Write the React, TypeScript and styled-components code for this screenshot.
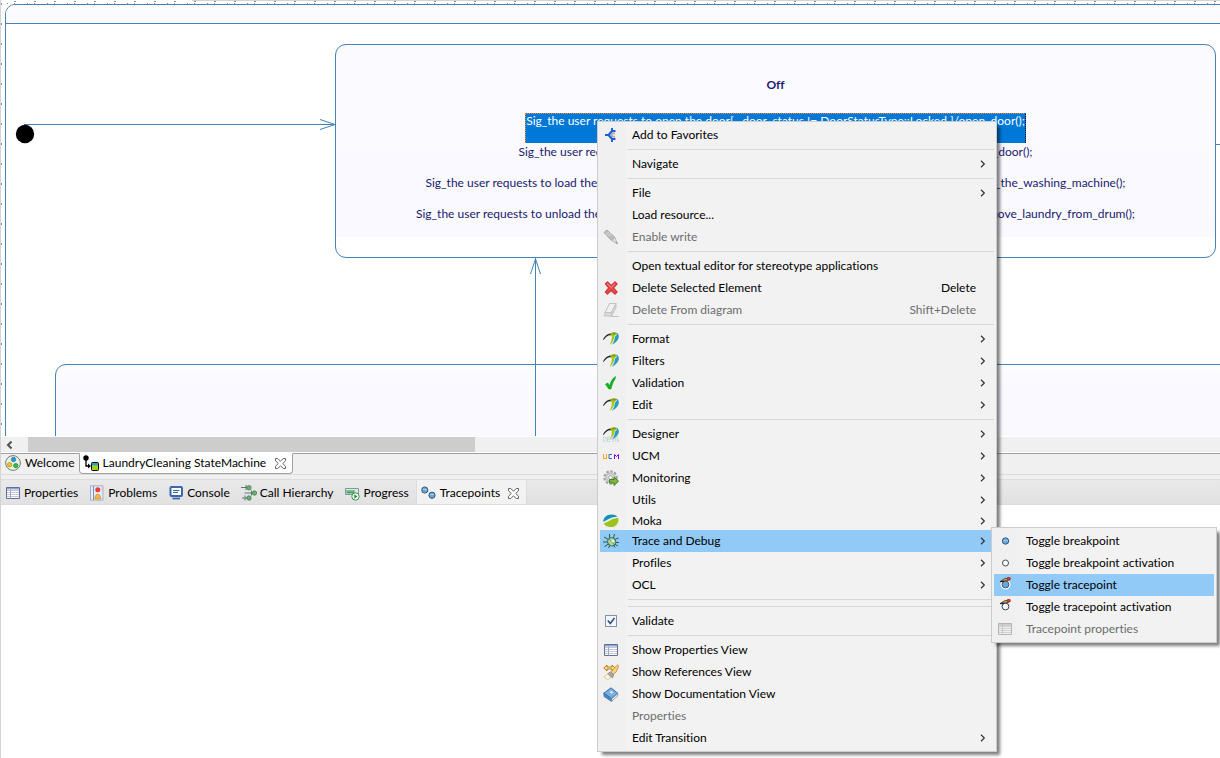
import React from "react";
import styled, { createGlobalStyle, css } from "styled-components";

const GlobalStyle = createGlobalStyle`
  *, *::before, *::after { box-sizing: border-box; }
  body {
    margin: 0;
    background: #fff;
    color: #000;
    font: 12px/16px Lato, "Open Sans", sans-serif;
    font-variant-ligatures: none;
  }
  button, input { font: inherit; color: inherit; font-variant-ligatures: none; }
`;

const line = "#4682b4";

/* ---------- workbench ---------- */

const Workbench = styled.main`
  position: relative;
  display: flex;
  flex-direction: column;
  min-height: 100vh;
  border-left: 1px solid #d4d4d4;
  overflow: hidden;
`;

/* ---------- diagram ---------- */

const Canvas = styled.section`
  position: relative;
  height: 436px;
  overflow: hidden;
  background: #fff;
`;

const TopRuler = styled.div`
  position: absolute;
  inset: 0 0 auto 0;
  height: 4px;
  background:
    repeating-linear-gradient(90deg, transparent 0 13px, #8c8c8c 13px 15px, transparent 15px 20px) 0 1px / 100% 1px no-repeat,
    repeating-linear-gradient(90deg, transparent 0 6px, #8c8c8c 6px 7px, transparent 7px 13px, #8c8c8c 13px 14px, transparent 14px 20px) 0 3px / 100% 1px no-repeat,
    linear-gradient(#d4d4d4, #d4d4d4) 191px 0 / 100% 1px no-repeat;
`;

const LeftRuler = styled.div`
  position: absolute;
  inset: 0 auto 0 0;
  width: 1px;
  background: repeating-linear-gradient(transparent 0 3px, #8c8c8c 3px 5px, transparent 5px 20px);
`;

const MachineFrame = styled.div`
  position: absolute;
  inset: 4px -20px -20px 4px;
  border: 1px solid ${line};
  border-radius: 10px;
  overflow: hidden;
`;

const MachineHeader = styled.div`
  height: 19px;
  border-bottom: 1px solid ${line};
  background: linear-gradient(#fdfdff, #f9f9ff);
`;

const OffState = styled.article`
  position: absolute;
  left: 334px;
  top: 44px;
  width: 881px;
  height: 214px;
  padding-top: 32px;
  border: 1px solid ${line};
  border-radius: 11px;
  background: linear-gradient(#fbfaff, #f9f9ff) 0 0 / 100% 192px no-repeat #fff;
  color: #191970;
`;

const StateName = styled.h1`
  margin: 0 0 20px;
  font-size: 12px;
  line-height: 16px;
  text-align: center;
`;

const Transition = styled.p<{ $width: number }>`
  display: flex;
  justify-content: space-between;
  width: ${(p) => p.$width}px;
  height: 31px;
  margin: 0 auto;
  white-space: nowrap;
`;

const SelectedTransition = styled.p`
  width: fit-content;
  height: 30px;
  margin: 0 auto 1px;
  border: 1px dotted #000;
  border-color: #ff8728 #000 transparent #ff8728;
  border-bottom: 0;
  background: #0078d7;
  color: #fff;
  line-height: 14px;
  white-space: nowrap;
`;

const LowerState = styled.article`
  position: absolute;
  inset: 364px -20px -20px 54px;
  border: 1px solid ${line};
  border-radius: 11px;
  background: linear-gradient(#fdfdff, #f9f9ff 24px);
`;

const Connectors = styled.svg`
  position: absolute;
  inset: 0;
  width: 100%;
  height: 100%;
`;

const ScrollBar = styled.div`
  display: flex;
  height: 15px;
  margin-top: 1px;
  background: #f0f0f0;
`;

const ScrollButton = styled.button`
  width: 27px;
  padding: 0 0 0 5px;
  border: 0;
  background: none;
  text-align: left;
  line-height: 0;
`;

const ScrollThumb = styled.div`
  width: 36.7%;
  background: #cdcdcd;
`;

/* ---------- tabs ---------- */

const EditorTabs = styled.nav`
  display: flex;
  height: 22px;
  margin-top: 1px;
  border-top: 1px solid #a0a0a0;
  border-bottom: 1px solid #dcdcdc;
  background: #f0f0f0;
`;

const EditorTab = styled.button<{ $active?: boolean }>`
  display: flex;
  align-items: center;
  gap: 4px;
  height: 20px;
  margin-top: -1px;
  padding: 0 4px;
  border: 0;
  background: none;
  white-space: nowrap;
  ${(p) =>
    p.$active &&
    css`
      height: 21px;
      padding: 0 6px 1px 3px;
      border: 1px solid #a0a0a0;
      border-top-color: #fff;
      border-radius: 0 0 4px 4px;
      background: #fff;
    `}
`;

const ViewTabs = styled.nav`
  display: flex;
  height: 26px;
  margin-top: 4px;
  border: solid #dcdcdc;
  border-width: 1px 0;
  background: linear-gradient(#e9e9e9, #e1e1e1);
  box-shadow: 0 -4px #f0f0f0;
`;

const ViewTab = styled.button<{ $active?: boolean }>`
  display: flex;
  align-items: center;
  gap: 3px;
  padding: 2px 7px 0 4px;
  border: 0;
  background: none;
  white-space: nowrap;
  ${(p) =>
    p.$active &&
    css`
      border: solid #dcdcdc;
      border-width: 0 1px;
      background: #f2f2f2;
    `}
`;

const CloseMark = styled.svg`
  width: 11px;
  height: 11px;
  margin-left: 5px;
`;

const ViewBody = styled.section`
  flex: 1;
  background: #fff;
`;

/* ---------- menus ---------- */

const menuBox = css`
  position: absolute;
  padding: 2px;
  border: 1px solid #ccc;
  background: linear-gradient(90deg, #f0f0f0 28px, #f2f2f2 28px);
  box-shadow: 4px 4px 3px -1px rgba(0, 0, 0, 0.5);
`;

const ContextMenu = styled.div`
  ${menuBox}
  left: 596px;
  top: 121px;
  width: 400px;
`;

const SubMenu = styled.div`
  ${menuBox}
  left: calc(100% - 3px);
  top: -3px;
  width: 226px;
`;

const ItemHost = styled.div`
  position: relative;
`;

const itemBox = css<{ $active?: boolean; $short?: boolean }>`
  display: flex;
  align-items: center;
  width: 100%;
  height: ${(p) => (p.$short ? 19 : 22)}px;
  padding: 0 8px 0 3px;
  border: 0;
  background: ${(p) => (p.$active ? "#91c9f7" : "none")};
  text-align: left;
  white-space: nowrap;
`;

const Item = styled.button<{ $active?: boolean; $short?: boolean }>`
  ${itemBox}
  &:disabled { color: #6d6d6d; }
`;

const CheckItem = styled.label`
  ${itemBox}
`;

const IconSlot = styled.span`
  flex: none;
  display: flex;
  align-items: center;
  justify-content: center;
  width: 16px;
  height: 16px;
  margin-right: 13px;
`;

const Check = styled.input`
  appearance: none;
  width: 12px;
  height: 12px;
  margin: 0;
  border: 1px solid #7d93ab;
  background: #f4f8fc;
`;

const CheckGlyph = styled.svg`
  position: absolute;
  width: 12px;
  height: 12px;
  pointer-events: none;
`;

const ItemText = styled.span`
  flex: 1;
`;

const Shortcut = styled.span`
  padding-right: 10px;
`;

const Separator = styled.hr`
  height: 7px;
  margin: 0 0 0 28px;
  border: 0;
  background: linear-gradient(#d7d7d7, #d7d7d7) 0 3px / 100% 1px no-repeat;
`;

/* ---------- icons ---------- */

const Glyph = styled.svg`
  flex: none;
  display: block;
  width: 16px;
  height: 16px;
`;

const I = ({ children }: { children: React.ReactNode }) => (
  <Glyph viewBox="0 0 16 16" aria-hidden="true">{children}</Glyph>
);

const Chevron = () => (
  <svg width="6" height="8" viewBox="0 0 6 8" aria-hidden="true">
    <path d="M1 .8 4.3 4 1 7.2" fill="none" stroke="#333" strokeWidth="1.2" />
  </svg>
);

const Close = () => (
  <CloseMark viewBox="0 0 11 11" aria-hidden="true">
    <path d="M.5.5h2.3l2.7 2.8L8.2.5h2.3v2.3L7.7 5.5l2.8 2.7v2.3H8.2L5.5 7.7l-2.7 2.8H.5V8.2l2.8-2.7L.5 2.8z" fill="#fff" stroke="#666" />
  </CloseMark>
);

const favorite = (
  <I>
    <path d="M12 6.300H9.800L8.300 8l1.500 1.700H12" fill="none" stroke="#b9b3ad" strokeWidth="2" />
    <path d="M12.500 4H9L5.500 8 9 12h3.500" fill="none" stroke="#1f62d6" strokeWidth="2.200" />
    <path d="M8 1h2v3H8zM8 12h2v3H8zM2 7h3v2H2z" fill="#1f62d6" />
  </I>
);
const pencil = (
  <I>
    <path d="M1 3.5 4 1l8 7.500-3.500 3z" fill="#bdbdbd" stroke="#a8a8a8" />
    <path d="M3 5.500 6.300 2.800M4.700 7 8 4.500" stroke="#ddd" />
    <path d="m12 8.500-3.500 3 6 3.500z" fill="#dedede" stroke="#a8a8a8" strokeWidth=".7" />
    <path d="m13.200 12.400-.9.900 2.700 1.700z" fill="#888" />
  </I>
);
const redCross = (
  <I>
    <path d="M2.500 3.700 4.500 2l3.700 3.800L12 2l2 2-3.600 3.900L14 12l-2 2-3.900-3.500L4.400 14l-2-1.900 3.400-4.200z" fill="#ea4b4b" stroke="#d23a3a" strokeWidth="1.400" strokeLinejoin="round" />
    <path d="m4 3.800 4.200 3.600L12 3.700" stroke="#f79a93" fill="none" />
  </I>
);
const eraser = (
  <I>
    <path d="M6.500 1.500h6.500L8.500 10.500H2z" fill="#f0f0f0" stroke="#c2c2c2" />
    <path d="M2 10.500h6.500v3.500H1.200zM8.500 10.500 13 1.500v4L8.500 14z" fill="#dcdcdc" stroke="#c2c2c2" />
    <path d="M8 14.500h8" stroke="#c2c2c2" />
  </I>
);
const swoosh = (
  <>
    <path d="M0 9C1.500 4.500 5 2 9.500 2.500L9 4.500C5.500 3.600 3 5.500.8 8.800z" fill="#222" />
    <path d="M7.500 2.300c2-1.600 5.500-1.300 6.500.7-1 0-2 .7-2.500 2.500-.5 2.500-1.300 6-5 8.500 2-4 2.700-7.200 2.300-9-.2-.8-.7-1.200-1.300-1.200z" fill="#a3c614" />
    <path d="M13.300 1.500c2 1 2.700 2.500 2.500 4.500-.3 3-3 6-7 7.700 2.300-2.900 2.800-5.500 3.200-7.500.3-1.500.8-2.200 2-2.300z" fill="#2a9cc0" />
    <path d="M8.500 2.300c1.800-1.200 4.100-1.200 5.500.2l-1 1.100H9z" fill="#7f9e16" />
  </>
);
const papyrus = <I>{swoosh}</I>;
const designer = (
  <I>
    {swoosh}
    <path d="M.5 11v4.500H2l1-1V12l-1-1zM7 11H4.500v4.500H7M4.500 13.200H7M10.500 11H8.600v2.200h1.900v2.300H8.600M12.500 11v4.500M15.500 11h-1.300v4.500h1.300v-2" fill="none" stroke="#c9d6da" />
  </I>
);
const greenCheck = (
  <I><path d="M2.500 9.200 4.800 8l2 2.800C7.500 7 9.300 3.500 12.500 1.500l-.4 2.500C9.800 7 8.800 10.500 8 14H5.800z" fill="#0bb31b" stroke="#08a016" strokeWidth=".6" /></I>
);
const ucm = (
  <I>
    <path d="M.5 6v4.500h3V6" fill="none" stroke="#f5a300" />
    <path d="M9 6.500H6v4h3" fill="none" stroke="#2f72c4" />
    <path d="M11.500 11V6.500l2 2 2-2V11" fill="none" stroke="#7a00f0" />
  </I>
);
const gear = (
  <I>
    <circle cx="7.500" cy="7.500" r="6" fill="none" stroke="#a2a2a2" strokeWidth="2.400" strokeDasharray="2.400 1.500" />
    <circle cx="7.500" cy="7.500" r="4.200" fill="#ededed" stroke="#c4c4c4" strokeWidth="2.400" />
    <circle cx="7.500" cy="7.500" r="2" fill="#fafafa" stroke="#8d8d8d" strokeWidth=".8" />
    <path d="M6.500 9.500H11V7l4.500 4.200L11 15.500V13H6.500z" fill="#80b53e" stroke="#3e7d1c" />
  </I>
);
const moka = (
  <I>
    <path d="M.3 9C.3 4.200 4 1.500 8.500 1.500c2.500 0 4.700.8 6 2.300C9 3.500 5 6.500.3 9z" fill="#0e93b8" />
    <path d="M.8 10.500C5.500 9 9.500 4.700 15.300 5c1 3.500-1.300 9-7.500 9-3.600 0-6-1.300-7-3.500z" fill="#9cc31c" />
  </I>
);
const bug = (
  <I>
    <path d="M6.500 1v4M11.500 1 10.500 5M1 4l4.500 2.500M15.500 5l-4 1.500M0 9h5M16 9.500h-4M1.500 13.500 5.500 11M5.500 15l1.500-3M12 14.500l-1-2.500M15 13l-3.500-2" stroke="#2a5b52" />
    <ellipse cx="8.700" cy="8.800" rx="4" ry="4.200" transform="rotate(-35 8.700 8.800)" fill="#a9d19b" stroke="#2f6b57" />
    <path d="m6.300 6.500 5 4.800" stroke="#4d8a60" strokeWidth=".8" />
    <circle cx="9.800" cy="8" r="1.500" fill="#e3f3d6" />
  </I>
);
const table = (
  <I>
    <path d="M1.500 2.500h13v11h-13z" fill="#fff" stroke="#5f6f95" />
    <path d="M2 3h12v1.500H2z" fill="#8fa3cd" />
    <path d="M2 5.500h12M2 7.500h12M2 9.500h12M2 11.500h12" stroke="#c2c9da" />
    <path d="M5.500 4.500v9" stroke="#9aa6c4" />
  </I>
);
const tableGray = (
  <I>
    <path d="M1.500 2.500h13v11h-13z" fill="#f2f2f2" stroke="#b4b4b4" />
    <path d="M2 3h12v2H2z" fill="#cecece" />
    <path d="M2 5.500h12M2 7.500h12M2 9.500h12M2 11.500h12" stroke="#d0d0d0" />
    <path d="M5.500 3v10" stroke="#c4c4c4" />
  </I>
);
const references = (
  <I>
    <path d="M.8 4 4 1v2h5V1l3 3-3 3V5H4v2z" fill="#ffe08a" stroke="#b06f16" strokeWidth=".9" />
    <path d="m14.500.8 1.200 1.400-2.700 6-3 2.300-2-2 2-3z" fill="#fbd37c" stroke="#c08526" strokeWidth=".8" />
    <path d="m7.500 7.800 3.200 3-1.200 3-5-3.800z" fill="#a6a6a6" stroke="#7b7b7b" strokeWidth=".7" />
    <path d="m4.500 10 3.500 3.500-3.500 2L1 13z" fill="#fdf6d8" stroke="#d3b56a" strokeWidth=".7" />
  </I>
);
const book = (
  <I>
    <path d="M.8 7.200 8 1.800l7 5.700-6.500 5z" fill="#7aaee0" stroke="#3b6fa8" />
    <path d="m.8 7.200 7.700 5.300v3L1 10.500z" fill="#4f86c2" stroke="#3b6fa8" strokeWidth=".7" />
    <path d="m8.800 12.800 6-5v2l-6 5.300z" fill="#fff" stroke="#6c7f96" strokeWidth=".7" />
    <path d="m6.500 6.300 2-1.500 2 1.400-2 1.600z" fill="#dbe9f8" />
  </I>
);
const breakpoint = (
  <I><circle cx="8.500" cy="8" r="3.200" fill="#6fa5cf" stroke="#2f5d86" /><path d="M6.500 7.500h4" stroke="#a5cbe8" /></I>
);
const breakpointOff = <I><circle cx="8.500" cy="8" r="3" fill="#fff" stroke="#4a4f57" /></I>;
const Pen = () => (
  <>
    <path d="M4 4.200 7 2l5-1 .5 2L7.500 4z" fill="#e8b23a" stroke="#2e2a22" strokeWidth=".8" />
    <path d="M10 .8 13 .300l.5 2-3 1z" fill="#e33a2e" stroke="#9d1f18" strokeWidth=".6" />
    <path d="M3 4.500h4" stroke="#222" strokeWidth="1.200" />
  </>
);
const tracepoint = (
  <I><circle cx="8.500" cy="7.500" r="3.700" fill="#6fa5cf" stroke="#fff" strokeWidth="2.500" /><circle cx="8.500" cy="7.500" r="3.400" fill="#6fa5cf" stroke="#2f5d86" /><Pen /></I>
);
const tracepointOff = (
  <I><circle cx="8.500" cy="7.500" r="3.400" fill="#fff" stroke="#2c4560" /><Pen /></I>
);
const welcome = (
  <I>
    <circle cx="8" cy="8" r="7.400" fill="#e9f0e2" stroke="#6f7d74" />
    <circle cx="8.500" cy="4.500" r="2.200" fill="#1e9bd6" stroke="#14719d" strokeWidth=".6" />
    <circle cx="4.600" cy="9.700" r="2.200" fill="#f0c224" stroke="#a5801c" strokeWidth=".6" />
    <circle cx="10.800" cy="10.600" r="2.200" fill="#2bbd3a" stroke="#12822a" strokeWidth=".6" />
  </I>
);
const stateMachine = (
  <I>
    <circle cx="3" cy="3" r="2.700" fill="#000" />
    <path d="M3 3v8h4" fill="none" stroke="#000" strokeWidth="1.300" />
    <path d="M5 8.500 8 11l-3 2.500z" fill="#000" />
    <rect x="8.500" y="7.500" width="7" height="8" rx="1" fill="#a5d01a" stroke="#000" />
    <path d="M9 8h6v2.500H9z" fill="#22a5c9" />
  </I>
);
const problems = (
  <I>
    <path d="M1.500.8H14v14.400H1.500z" fill="#e4ecf6" stroke="#a3b1ca" />
    <path d="M4.500 1v14" stroke="#7c8fb4" />
    <circle cx="8.800" cy="4.800" r="2.500" fill="#e33d3d" />
    <path d="M8.800 9c1.900 0 3 3 3 5h-6c0-2 1-5 3-5z" fill="#f3b43c" stroke="#d17f22" strokeWidth=".6" />
    <path d="M12.500 1.500h1v5h-1z" fill="#f7b9a8" />
  </I>
);
const consoleIcon = (
  <I>
    <rect x="2.500" y="2" width="11.500" height="9" rx="1" fill="#fff" stroke="#3a67ad" strokeWidth="2" />
    <path d="M5 5.500h6.500M5 7.500h5" stroke="#42628f" />
    <path d="M4.500 13.500H12" stroke="#3a67ad" strokeWidth="1.800" />
  </I>
);
const hierarchy = (
  <I>
    <path d="M0 2.500h7M3.500 8h9M1 13h6M5 0v5M10.500 5.500v5M4 10.500v5" fill="none" stroke="#68747b" />
    <circle cx="8" cy="2.800" r="2.200" fill="#6bb06d" stroke="#2f7a4a" strokeWidth=".7" />
    <circle cx="13.500" cy="8" r="2.200" fill="#6bb06d" stroke="#2f7a4a" strokeWidth=".7" />
    <circle cx="8" cy="13" r="2.200" fill="#6bb06d" stroke="#2f7a4a" strokeWidth=".7" />
  </I>
);
const progress = (
  <I>
    <path d="M.5 3.500h13v6H.5z" fill="#dfe6ea" stroke="#7f9a9d" />
    <path d="M1.500 5h8v3.500h-8z" fill="#4aa45b" />
    <path d="M1.500 5h8v1.500h-8z" fill="#7cc98a" />
    <circle cx="10.500" cy="11.500" r="3.700" fill="#f4fbf4" stroke="#3c9350" />
    <path d="M9.300 9.300 12.500 11.500l-3.200 2.200z" fill="#2e8b45" />
  </I>
);
const tracepoints = (
  <I>
    <circle cx="3.800" cy="5" r="3.100" fill="#6fa5cf" stroke="#2f5d86" />
    <circle cx="11" cy="10.200" r="3.100" fill="#6fa5cf" stroke="#2f5d86" />
    <path d="M2 4.500h4M9 9.500h4" stroke="#a5cbe8" />
  </I>
);

/* ---------- menu data ---------- */

type Entry =
  | "-"
  | {
      text: string;
      icon?: React.ReactNode;
      more?: boolean;
      disabled?: boolean;
      active?: boolean;
      short?: boolean;
      keys?: string;
      check?: boolean;
      sub?: Entry[];
    };

const traceMenu: Entry[] = [
  { text: "Toggle breakpoint", icon: breakpoint },
  { text: "Toggle breakpoint activation", icon: breakpointOff },
  { text: "Toggle tracepoint", icon: tracepoint, active: true },
  { text: "Toggle tracepoint activation", icon: tracepointOff },
  { text: "Tracepoint properties", icon: tableGray, disabled: true },
];

const mainMenu: Entry[] = [
  { text: "Add to Favorites", icon: favorite },
  "-",
  { text: "Navigate", more: true },
  "-",
  { text: "File", more: true },
  { text: "Load resource..." },
  { text: "Enable write", icon: pencil, disabled: true },
  "-",
  { text: "Open textual editor for stereotype applications" },
  { text: "Delete Selected Element", icon: redCross, keys: "Delete" },
  { text: "Delete From diagram", icon: eraser, keys: "Shift+Delete", disabled: true },
  "-",
  { text: "Format", icon: papyrus, more: true },
  { text: "Filters", icon: papyrus, more: true },
  { text: "Validation", icon: greenCheck, more: true },
  { text: "Edit", icon: papyrus, more: true },
  "-",
  { text: "Designer", icon: designer, more: true },
  { text: "UCM", icon: ucm, more: true },
  { text: "Monitoring", icon: gear, more: true },
  { text: "Utils", more: true },
  { text: "Moka", icon: moka, more: true, short: true },
  { text: "Trace and Debug", icon: bug, more: true, active: true, sub: traceMenu },
  { text: "Profiles", more: true },
  { text: "OCL", more: true },
  "-",
  "-",
  { text: "Validate", check: true },
  "-",
  { text: "Show Properties View", icon: table },
  { text: "Show References View", icon: references },
  { text: "Show Documentation View", icon: book },
  { text: "Properties", disabled: true },
  { text: "Edit Transition", more: true },
];

const MenuEntries = ({ entries }: { entries: Entry[] }) => (
  <>
    {entries.map((e, i) => {
      if (e === "-") return <Separator key={i} />;
      if (e.check)
        return (
          <CheckItem key={i}>
            <IconSlot>
              <Check type="checkbox" defaultChecked />
              <CheckGlyph viewBox="0 0 12 12" aria-hidden="true">
                <path d="m2.800 5.500 2.500 3L9.500 3" fill="none" stroke="#2f4f75" strokeWidth="1.600" />
              </CheckGlyph>
            </IconSlot>
            <ItemText>{e.text}</ItemText>
          </CheckItem>
        );
      return (
        <ItemHost key={i}>
          <Item role="menuitem" disabled={e.disabled} $active={e.active} $short={e.short}>
            <IconSlot>{e.icon}</IconSlot>
            <ItemText>{e.text}</ItemText>
            {e.keys && <Shortcut>{e.keys}</Shortcut>}
            {e.more && <Chevron />}
          </Item>
          {e.sub && (
            <SubMenu role="menu">
              <MenuEntries entries={e.sub} />
            </SubMenu>
          )}
        </ItemHost>
      );
    })}
  </>
);

const views = [
  { text: "Properties", icon: table },
  { text: "Problems", icon: problems },
  { text: "Console", icon: consoleIcon },
  { text: "Call Hierarchy", icon: hierarchy },
  { text: "Progress", icon: progress },
];

const transitions = [
  { from: "Sig_the user requests", to: "_door();", width: 514 },
  { from: "Sig_the user requests to load the", to: "_the_washing_machine();", width: 700 },
  { from: "Sig_the user requests to unload the", to: "remove_laundry_from_drum();", width: 719 },
];

export default function App() {
  return (
    <Workbench>
      <GlobalStyle />
      <Canvas aria-label="State machine diagram">
        <TopRuler />
        <LeftRuler />
        <MachineFrame>
          <MachineHeader />
        </MachineFrame>
        <OffState>
          <StateName>Off</StateName>
          <SelectedTransition>
            Sig_the user requests to open the door[ _door_status != DoorStatusType::Locked ]/open_door();
          </SelectedTransition>
          {transitions.map((t) => (
            <Transition key={t.to} $width={t.width}>
              <span>{t.from}</span>
              <span>{t.to}</span>
            </Transition>
          ))}
        </OffState>
        <LowerState />
        <Connectors aria-hidden="true">
          <g fill="none" stroke={line}>
            <path d="M23 124.500H334M1215 144.500H3000M534.500 258V436" shapeRendering="crispEdges" />
            <path d="M319 119.500 334 124.500 319 129.500M529.500 274 534.500 259 539.500 274" />
          </g>
          <circle cx="24" cy="134" r="9.200" />
        </Connectors>
      </Canvas>
      <ScrollBar>
        <ScrollButton aria-label="Scroll left">
          <svg width="7" height="8" viewBox="0 0 7 8" aria-hidden="true">
            <path d="M5.500.5 2 4l3.500 3.500" fill="none" stroke="#505050" strokeWidth="2" />
          </svg>
        </ScrollButton>
        <ScrollThumb />
      </ScrollBar>
      <EditorTabs>
        <EditorTab>{welcome}Welcome</EditorTab>
        <EditorTab $active>
          {stateMachine}LaundryCleaning StateMachine
          <Close />
        </EditorTab>
      </EditorTabs>
      <ViewTabs>
        {views.map((v) => (
          <ViewTab key={v.text}>{v.icon}{v.text}</ViewTab>
        ))}
        <ViewTab $active>
          {tracepoints}Tracepoints
          <Close />
        </ViewTab>
      </ViewTabs>
      <ViewBody />
      <ContextMenu role="menu">
        <MenuEntries entries={mainMenu} />
      </ContextMenu>
    </Workbench>
  );
}
